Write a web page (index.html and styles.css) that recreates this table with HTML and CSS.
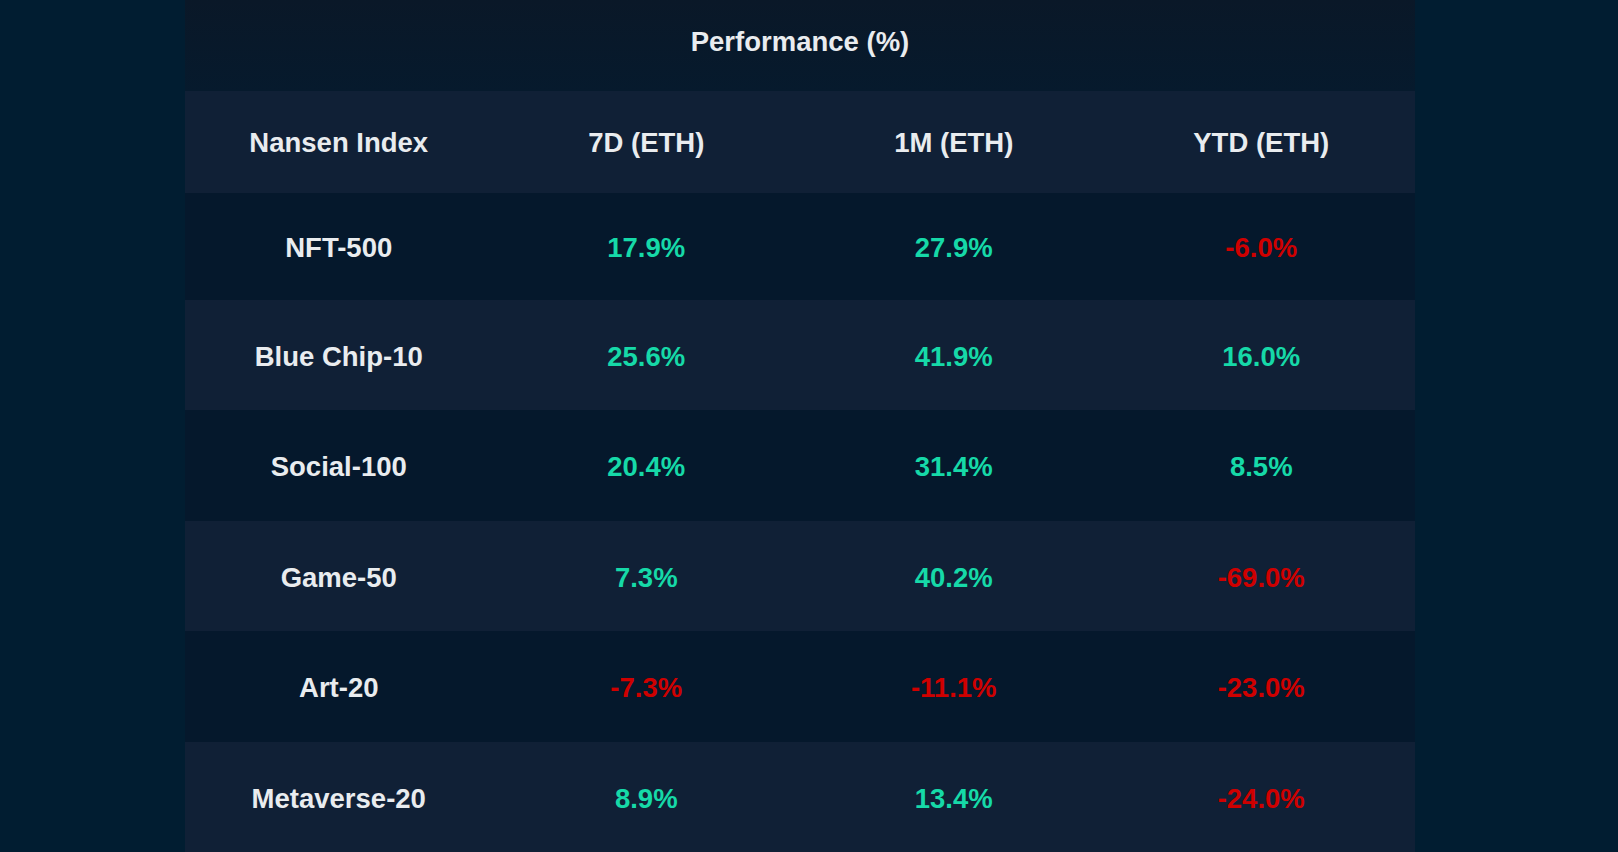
FILE: index.html
```html
<!DOCTYPE html>
<html lang="en">
<head>
<meta charset="utf-8">
<title>Nansen Index Performance</title>
<link rel="stylesheet" href="styles.css">
</head>
<body>
<main class="page">
  <section class="panel">
    <h1 class="title">Performance (%)</h1>
    <div class="grid">
      <div class="row head">
        <div class="cell">Nansen Index</div>
        <div class="cell">7D (ETH)</div>
        <div class="cell">1M (ETH)</div>
        <div class="cell">YTD (ETH)</div>
      </div>
      <div class="row odd first">
        <div class="cell">NFT-500</div>
        <div class="cell up">17.9%</div>
        <div class="cell up">27.9%</div>
        <div class="cell down">-6.0%</div>
      </div>
      <div class="row even">
        <div class="cell">Blue Chip-10</div>
        <div class="cell up">25.6%</div>
        <div class="cell up">41.9%</div>
        <div class="cell up">16.0%</div>
      </div>
      <div class="row odd">
        <div class="cell">Social-100</div>
        <div class="cell up">20.4%</div>
        <div class="cell up">31.4%</div>
        <div class="cell up">8.5%</div>
      </div>
      <div class="row even">
        <div class="cell">Game-50</div>
        <div class="cell up">7.3%</div>
        <div class="cell up">40.2%</div>
        <div class="cell down">-69.0%</div>
      </div>
      <div class="row odd">
        <div class="cell">Art-20</div>
        <div class="cell down">-7.3%</div>
        <div class="cell down">-11.1%</div>
        <div class="cell down">-23.0%</div>
      </div>
      <div class="row even">
        <div class="cell">Metaverse-20</div>
        <div class="cell up">8.9%</div>
        <div class="cell up">13.4%</div>
        <div class="cell down">-24.0%</div>
      </div>
    </div>
  </section>
</main>
</body>
</html>
```

FILE: styles.css
```css
html, body {
  margin: 0;
  padding: 0;
  background: #011d31;
  height: 100%;
  overflow: hidden;
}

.page {
  display: flex;
  justify-content: flex-start;
  box-sizing: border-box;
  padding-left: 185px;
  width: 1618px;
  height: 852px;
  font-family: "Liberation Sans", Arial, sans-serif;
  font-weight: 700;
  color: #e9ecef;
}

.panel {
  width: 1230px;
  display: flex;
  flex-direction: column;
}

.title {
  margin: 0;
  height: 91px;
  box-sizing: border-box;
  padding-top: 27px;
  font-size: 27.5px;
  line-height: 30px;
  font-weight: 700;
  text-align: center;
  background: linear-gradient(180deg, #0a1828 0%, #061a2d 100%);
  color: #e9ecef;
}

.grid {
  display: flex;
  flex-direction: column;
}

.row {
  display: grid;
  grid-template-columns: repeat(4, 1fr);
  align-items: center;
  box-sizing: border-box;
  padding-top: 4px;
  height: 110.5px;
}

.row.head {
  height: 102px;
  padding-top: 2px;
  background: #102036;
}

.row.first {
  height: 107px;
}

.row.odd {
  background: #05182c;
}

.row.even {
  background: #102036;
}

.cell {
  text-align: center;
  font-size: 27.5px;
  line-height: 30px;
}

.up {
  color: #16d9a8;
}

.down {
  color: #cf0000;
}
```
